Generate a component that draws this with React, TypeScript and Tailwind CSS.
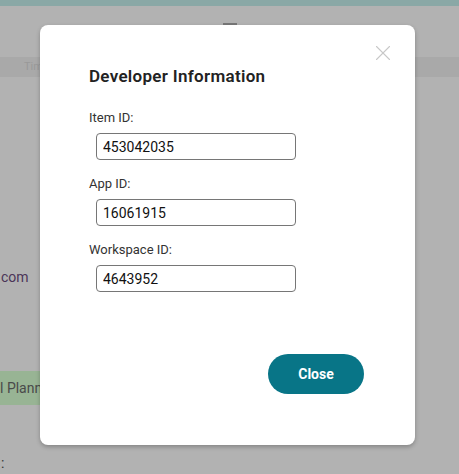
import React from "react";
import { X } from "lucide-react";

const fields = [
  { label: "Item ID:", value: "453042035" },
  { label: "App ID:", value: "16061915" },
  { label: "Workspace ID:", value: "4643952" },
];

function Field({ label, value }: { label: string; value: string }) {
  return (
    <div className="flex flex-col">
      <label className="text-[13px] leading-[20px] text-[#333]">{label}</label>
      <input
        readOnly
        value={value}
        className="mt-[5px] ml-[7px] w-[200px] h-[27px] rounded-[4px] border border-[#767676] px-[6px] text-[14px] text-[#111] outline-none"
      />
    </div>
  );
}

export default function App() {
  return (
    <div
      className="relative w-[459px] h-[474px] overflow-hidden bg-[#b2b2b2]"
      style={{ fontFamily: "Roboto, 'Noto Sans', sans-serif" }}
    >
      {/* page behind the overlay */}
      <div className="flex flex-col">
        <div className="h-[6px] bg-[#8aa8a6]" />
        <div className="h-[51px] flex items-end justify-center gap-[50px] pb-[28px]">
          <span className="w-[2px] h-[2px] bg-[#999]" />
          <span className="w-[14px] h-[6px] border-t-2 border-x border-[#777]" />
          <span className="w-[2px] h-[2px] bg-[#999]" />
        </div>
        <div className="h-[20px] bg-[#a9a9a9] flex items-center pl-[24px] text-[11px] text-[#999]">
          Tim
        </div>
        <div className="mt-[190px] pl-[1px] text-[14px] leading-[20px] text-[#4b3558]">
          com
        </div>
        <div className="mt-[84px] w-[60px] h-[34px] bg-[#98b494] flex items-center text-[14px] text-[#4a4a4a] whitespace-nowrap">
          l Planner
        </div>
        <div className="mt-[50px] pl-[1px] text-[14px] leading-[16px] text-[#333]">:</div>
      </div>

      {/* developer info dialog */}
      <div className="absolute left-[40px] top-[25px] w-[375px] h-[420px] rounded-[8px] bg-white shadow-[0_2px_4px_rgba(0,0,0,0.25)] flex flex-col pl-[49px] pt-[40px]">
        <button className="absolute right-[19px] top-[15px] text-[#c8c8c8]">
          <X size={26} strokeWidth={1} />
        </button>
        <h2 className="text-[17px] leading-[22px] font-semibold tracking-[0.3px] text-[#222]">
          Developer Information
        </h2>
        <div className="mt-[21px] flex flex-col gap-[14px]">
          {fields.map((f) => (
            <Field key={f.label} label={f.label} value={f.value} />
          ))}
        </div>
        <div className="mt-[62px] flex justify-end pr-[51px]">
          <button className="w-[96px] h-[40px] rounded-full bg-[#087587] text-white text-[14px] font-bold">
            Close
          </button>
        </div>
      </div>
    </div>
  );
}
